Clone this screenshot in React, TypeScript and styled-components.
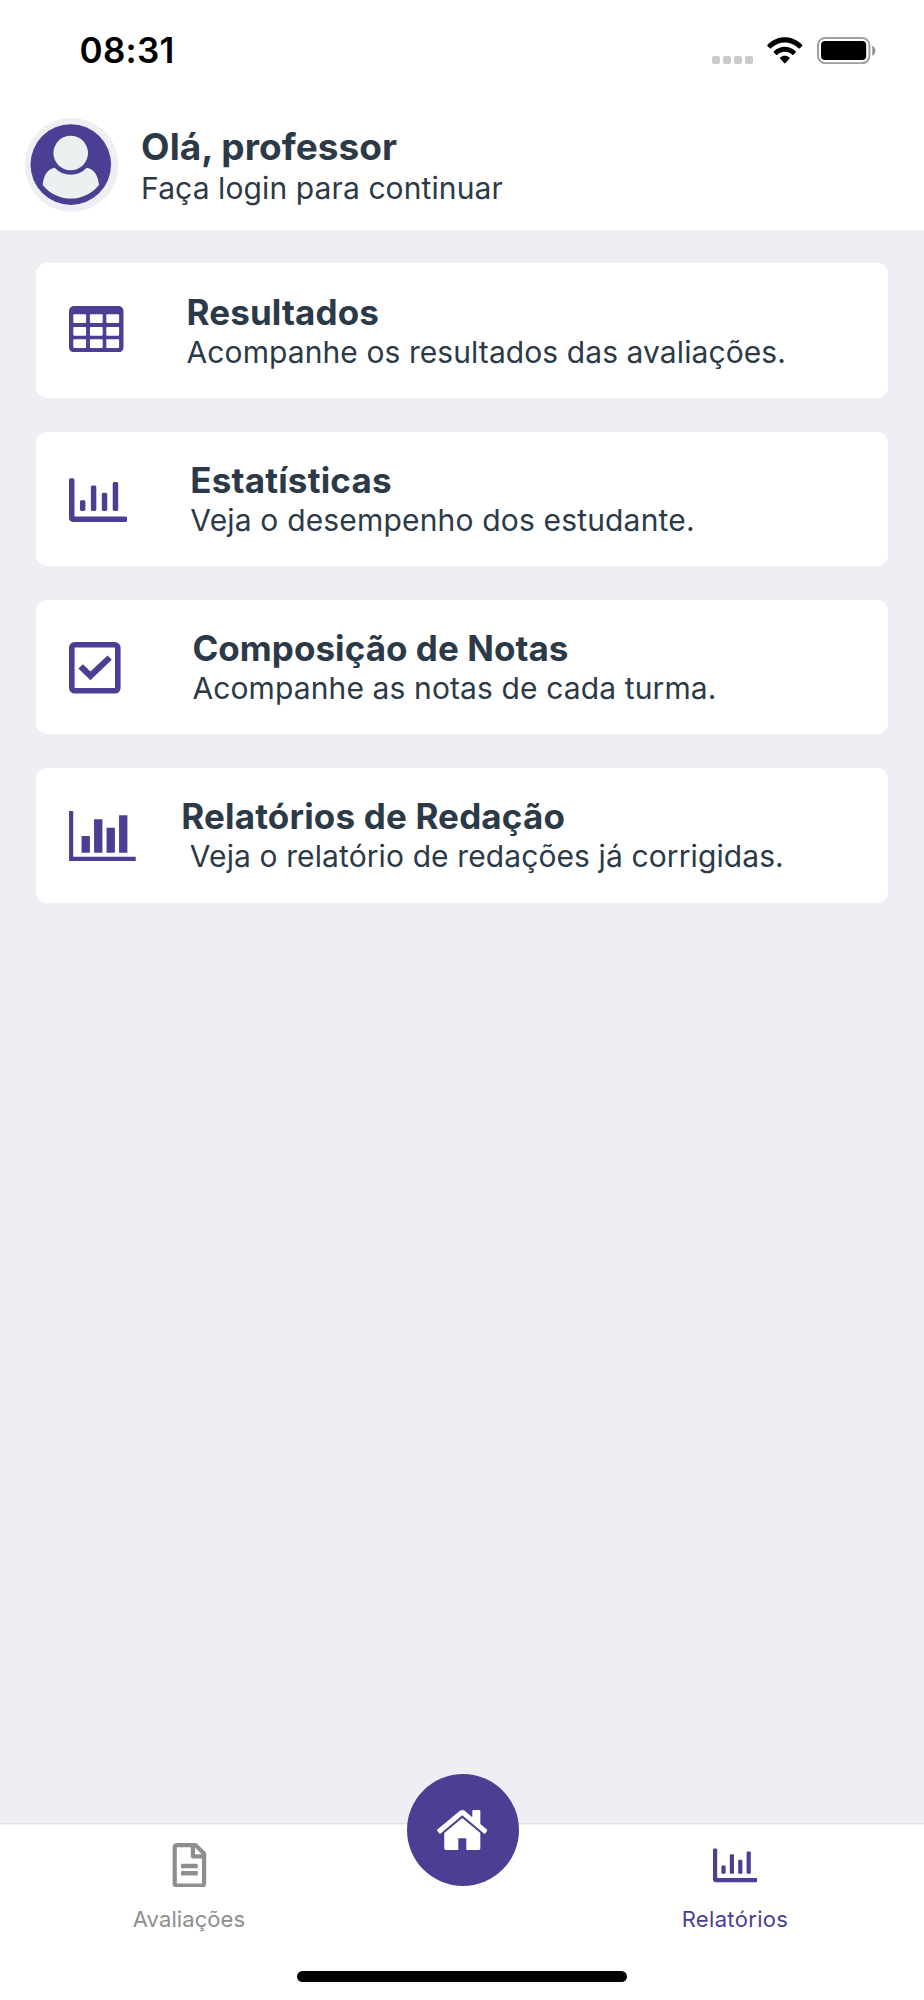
import React from 'react';
import styled, { createGlobalStyle } from 'styled-components';
import { FaRegChartBar, FaRegFileAlt } from 'react-icons/fa';

const purple = '#4a3f93';
const ink = '#2c3a47';
const page = '#eeeff5';
const muted = '#8e8e8f';

const GlobalStyle = createGlobalStyle`
  *, *::before, *::after { box-sizing: border-box; }
  body { margin: 0; background: ${page}; }
  svg { display: block; flex: none; }
`;

const Screen = styled.div`
  display: flex;
  flex-direction: column;
  width: 924px;
  height: 2000px;
  overflow: hidden;
  background: ${page};
  color: ${ink};
  font-family: Inter, 'Liberation Sans', sans-serif;
`;

const StatusBar = styled.div`
  display: flex;
  justify-content: space-between;
  height: 100px;
  padding: 0 47.7px 0 79.5px;
  background: #fff;
`;

const Clock = styled.time`
  padding-top: 29px;
  color: #000;
  font-size: 35px;
  font-weight: 600;
  line-height: 42px;
  letter-spacing: 0.3px;
`;

const StatusIcons = styled.div`
  display: flex;
  align-items: flex-end;
  height: 64px;
`;

const Signal = styled.div`
  display: flex;
  gap: 3.7px;
  margin: 0 14.6px 0.4px 0;
`;

const SignalDot = styled.span`
  width: 7.4px;
  height: 7.6px;
  border-radius: 2px;
  background: #cbcbcb;
`;

const BatterySlot = styled.div`
  margin-left: 14.3px;
`;

const Header = styled.header`
  display: flex;
  gap: 22.7px;
  height: 130px;
  padding: 18px 25px 0;
  background: #fff;
`;

const Avatar = styled.div`
  flex: none;
  width: 93.4px;
  height: 93.8px;
`;

const Greeting = styled.div`
  padding-top: 6.6px;
`;

const GreetingTitle = styled.h1`
  margin: 0;
  font-size: 37px;
  font-weight: 700;
  line-height: 44.5px;
  letter-spacing: 0.05px;
`;

const GreetingText = styled.p`
  margin: 0;
  font-size: 30px;
  line-height: 38px;
  letter-spacing: 0.1px;
`;

const CardList = styled.main`
  display: flex;
  flex: 1;
  flex-direction: column;
  gap: 33.6px;
  padding: 33.4px 36px 0;
`;

const Card = styled.section`
  display: flex;
  align-items: center;
  height: 134.6px;
  padding: 0 33px;
  border-radius: 11px;
  background: #fff;
`;

const CardIcon = styled.div<{ $width: number; $drop: number }>`
  display: flex;
  flex: none;
  width: ${(p) => p.$width}px;
  margin-top: ${(p) => p.$drop}px;
  color: ${purple};
`;

const CardTitle = styled.h2<{ $tracking: number }>`
  margin: 0;
  font-size: 35px;
  font-weight: 700;
  line-height: 42px;
  letter-spacing: ${(p) => p.$tracking}px;
`;

const CardText = styled.p<{ $tracking: number }>`
  margin: 0;
  font-size: 30px;
  line-height: 38px;
  letter-spacing: ${(p) => p.$tracking}px;
  white-space: pre;
`;

const TabBar = styled.nav`
  position: relative;
  display: flex;
  justify-content: center;
  gap: 161px;
  height: 177px;
  border-top: 1px solid #e0e1e6;
  background: #fff;
  box-shadow: inset 0 1px #f1f2f5;
`;

const Tab = styled.div<{ $active?: boolean }>`
  display: flex;
  flex-direction: column;
  align-items: center;
  width: 112px;
  padding-top: 18.5px;
  color: ${(p) => (p.$active ? purple : muted)};
`;

const TabLabel = styled.span<{ $tracking: number }>`
  margin-top: 17.5px;
  font-size: 22px;
  line-height: 28px;
  letter-spacing: ${(p) => p.$tracking}px;
`;

const HomeButton = styled.div`
  display: flex;
  justify-content: center;
  flex: none;
  width: 112px;
  height: 112px;
  margin: -50px -0.6px 0 0.6px;
  padding: 36px 1.200px 0 0;
  border-radius: 50%;
  background: ${purple};
  color: #fff;
`;

const HomeIndicator = styled.div`
  position: absolute;
  bottom: 18.3px;
  left: 296.7px;
  width: 330.3px;
  height: 11px;
  border-radius: 6px;
  background: #000;
`;

const WifiIcon = () => (
  <svg width="35.6" height="26.8" viewBox="0 0 35.6 26.8">
    <path d="M.5 7.7C10 -2.4 25.6 -2.4 35.1 7.7q.6.7 0 1.4l-2.2 2.2q-.7.6-1.4 0C23.8 3.7 11.8 3.7 4.1 11.3q-.7.6-1.4 0L.5 9.1q-.6-.7 0-1.4z" />
    <path d="M6.9 14.2c6.1-6 15.7-6 21.8 0q.6.7 0 1.4l-2.2 2.1q-.7.6-1.4 0c-4.2-3.8-10.4-3.8-14.6 0q-.7.6-1.4 0l-2.2-2.1q-.6-.7 0-1.4z" />
    <path d="M13.2 20.4c2.7-2.2 6.5-2.2 9.2 0q.7.7 0 1.4l-3.9 4.3q-.7.7-1.4 0l-3.9-4.3q-.7-.7 0-1.4z" />
  </svg>
);

const BatteryIcon = () => (
  <svg width="59" height="27.2" viewBox="0 0 59 27.2">
    <rect x="1" y="1" width="51.4" height="25.2" rx="7.2" fill="none" stroke="#9f9f9f" strokeWidth="2" />
    <rect x="4" y="4.1" width="45.2" height="19" rx="4" />
    <path d="M55.3 8.7c1.9.8 3.1 2.7 3.1 5s-1.2 4.2-3.1 5z" fill="#8f8f8f" />
  </svg>
);

const AvatarIcon = () => (
  <svg width="93.4" height="93.8" viewBox="0 0 93.4 93.8">
    <ellipse cx="46.7" cy="46.9" rx="46.7" ry="46.9" fill={page} />
    <circle cx="45.8" cy="46.6" r="40.3" fill={purple} />
    <circle cx="45.7" cy="35" r="17.3" fill="#ecf0f1" />
    <path
      d="M29.6 49.8a22.2 22.2 0 0 0 32.2 0C69.5 51 73.2 58.500 74 67a36 36 0 0 1-56.3 0C18.500 58.500 22 51 29.6 49.8z"
      fill="#ecf0f1"
    />
  </svg>
);

const TableIcon = () => (
  <svg width="54.5" height="46.4" viewBox="0 0 54.5 46.4">
    <rect width="54.5" height="46.4" rx="5" fill="currentColor" />
    {[8.3, 20.9, 33.2].map((y) =>
      [4.3, 20.9, 37.3].map((x) => (
        <rect key={`${x}-${y}`} x={x} y={y} width="12.8" height="8.8" rx="1" fill="#fff" />
      )),
    )}
  </svg>
);

const CheckBoxIcon = () => (
  <svg width="51.6" height="51.6" viewBox="0 0 51.6 51.6">
    <rect x="2.8" y="2.8" width="46" height="46" rx="2.8" fill="none" stroke="currentColor" strokeWidth="5.6" />
    <path d="M9.400 26.500l4.500-4.200 7.500 7.300 17.200-16 4.200 4.200-21.400 20.500z" fill="currentColor" />
  </svg>
);

const BarChartIcon = () => (
  <svg width="66.8" height="50" viewBox="0 0 2048 1536" fill="currentColor">
    <path d="M640 768v512H384V768h256zm384-512v1024H768V256h256zm1024 1152v128H0V0h128v1408h1920zm-640-896v768h-256V512h256zm384-384v1152h-256V128h256z" />
  </svg>
);

const HomeIcon = () => (
  <svg width="50.6" height="40.2" viewBox="25 253 1614 1283" fill="currentColor">
    <path d="M1408 992v480q0 26-19 45t-45 19H960v-384H704v384H320q-26 0-45-19t-19-45V992q0-1 .5-3t.5-3l575-474 575 474q1 2 1 6zm223-69l-62 74q-8 9-21 11h-3q-13 0-21-7L832 424 140 1001q-12 8-24 7-13-2-21-11l-62-74q-8-10-7-23.5T37 878L756 279q32-26 76-26t76 26l244 204V288q0-14 9-23t23-9h192q14 0 23 9t9 23v408l219 182q10 8 11 21.5t-7 23.5z" />
  </svg>
);

const cards = [
  {
    title: 'Resultados',
    text: 'Acompanhe os resultados das avaliações.',
    icon: <TableIcon />,
    iconWidth: 117.6,
    iconDrop: -3,
    titleTracking: 0.12,
    textTracking: 0.08,
  },
  {
    title: 'Estatísticas',
    text: 'Veja o desempenho dos estudante.',
    icon: <FaRegChartBar size={58.3} />,
    iconWidth: 121.3,
    iconDrop: 2,
    titleTracking: 0.18,
    textTracking: 0.17,
  },
  {
    title: 'Composição de Notas',
    text: 'Acompanhe as notas de cada turma.',
    icon: <CheckBoxIcon />,
    iconWidth: 123.4,
    iconDrop: 2,
    titleTracking: 0.05,
    textTracking: 0.12,
  },
  {
    title: 'Relatórios de Redação',
    text: ' Veja o relatório de redações já corrigidas.',
    icon: <BarChartIcon />,
    iconWidth: 112.3,
    iconDrop: 1.2,
    titleTracking: 0.17,
    textTracking: 0.105,
  },
];

export default function App() {
  return (
    <Screen>
      <GlobalStyle />
      <StatusBar>
        <Clock>08:31</Clock>
        <StatusIcons>
          <Signal>
            <SignalDot />
            <SignalDot />
            <SignalDot />
            <SignalDot />
          </Signal>
          <WifiIcon />
          <BatterySlot>
            <BatteryIcon />
          </BatterySlot>
        </StatusIcons>
      </StatusBar>
      <Header>
        <Avatar>
          <AvatarIcon />
        </Avatar>
        <Greeting>
          <GreetingTitle>Olá, professor</GreetingTitle>
          <GreetingText>Faça login para continuar</GreetingText>
        </Greeting>
      </Header>
      <CardList>
        {cards.map((card) => (
          <Card key={card.title}>
            <CardIcon $width={card.iconWidth} $drop={card.iconDrop}>
              {card.icon}
            </CardIcon>
            <div>
              <CardTitle $tracking={card.titleTracking}>{card.title}</CardTitle>
              <CardText $tracking={card.textTracking}>{card.text}</CardText>
            </div>
          </Card>
        ))}
      </CardList>
      <TabBar>
        <Tab>
          <FaRegFileAlt size={44.8} />
          <TabLabel $tracking={0.08}>Avaliações</TabLabel>
        </Tab>
        <HomeButton>
          <HomeIcon />
        </HomeButton>
        <Tab $active>
          <FaRegChartBar size={44.8} />
          <TabLabel $tracking={0.33}>Relatórios</TabLabel>
        </Tab>
        <HomeIndicator />
      </TabBar>
    </Screen>
  );
}
